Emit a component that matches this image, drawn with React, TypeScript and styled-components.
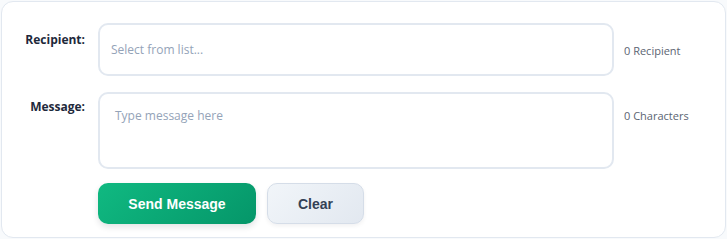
import React, { useState } from 'react';
import styled, { createGlobalStyle } from 'styled-components';

const GlobalStyle = createGlobalStyle`
  html, body {
    margin: 0;
    padding: 0;
    background: #f8fafc;
  }
  body {
    font-family: "Open Sans", "Noto Sans", sans-serif;
  }
`;

const Page = styled.div`
  padding: 1px;
`;

const Card = styled.form`
  box-sizing: border-box;
  width: 725px;
  height: 237px;
  background: #ffffff;
  border: 1px solid #e2e8f0;
  border-radius: 12px;
  padding: 21px 20px 0 19px;
  display: flex;
  flex-direction: column;
  gap: 16px;
`;

const Row = styled.div`
  display: flex;
  align-items: flex-start;
`;

const Label = styled.label<{ offset: number }>`
  width: 64px;
  flex: 0 0 64px;
  text-align: right;
  font-size: 12px;
  font-weight: 700;
  line-height: 16px;
  color: #1e293b;
  padding-top: ${p => p.offset}px;
  margin-right: 13px;
`;

const fieldBase = `
  box-sizing: border-box;
  width: 516px;
  flex: 0 0 516px;
  border: 2px solid #e2e8f0;
  border-radius: 10px;
  background: #ffffff;
  font-family: "Open Sans", "Noto Sans", sans-serif;
  font-size: 12px;
  color: #1e293b;
  outline: none;
  margin: 0;
  &::placeholder {
    color: #94a3b8;
  }
`;

const Input = styled.input`
  ${fieldBase}
  height: 53px;
  padding: 0 11px;
`;

const TextArea = styled.textarea`
  ${fieldBase}
  height: 77px;
  padding: 13px 15px;
  line-height: 18px;
  resize: none;
`;

const Side = styled.span<{ offset: number }>`
  margin-left: 10px;
  padding-top: ${p => p.offset}px;
  font-size: 11px;
  line-height: 16px;
  color: #5b6472;
`;

const Actions = styled.div`
  display: flex;
  gap: 11px;
  margin-left: 77px;
  margin-top: -2px;
`;

const Button = styled.button<{ variant: 'primary' | 'secondary' }>`
  box-sizing: border-box;
  height: 41px;
  border-radius: 10px;
  font-family: "Liberation Sans", Arial, sans-serif;
  font-size: 14px;
  font-weight: 700;
  cursor: pointer;
  padding: 0;
  ${p =>
    p.variant === 'primary'
      ? `
    width: 158px;
    border: none;
    color: #ffffff;
    background: linear-gradient(135deg, #10b981 0%, #059669 100%);
    box-shadow: 0 3px 6px rgba(15, 23, 42, 0.12);
  `
      : `
    width: 97px;
    border: 1px solid #d5dde8;
    color: #334155;
    background: linear-gradient(135deg, #f1f5f9 0%, #e2e8f0 100%);
    box-shadow: 0 2px 4px rgba(15, 23, 42, 0.06);
  `}
`;

export default function App() {
  const [recipient, setRecipient] = useState('');
  const [message, setMessage] = useState('');

  const recipientCount = recipient.trim() ? recipient.split(',').filter(s => s.trim()).length : 0;

  return (
    <Page>
      <GlobalStyle />
      <Card onSubmit={e => e.preventDefault()}>
        <Row>
          <Label offset={9}>Recipient:</Label>
          <Input
            placeholder="Select from list..."
            value={recipient}
            onChange={e => setRecipient(e.target.value)}
          />
          <Side offset={20}>{recipientCount} Recipient</Side>
        </Row>
        <Row>
          <Label offset={7}>Message:</Label>
          <TextArea
            placeholder="Type message here"
            value={message}
            onChange={e => setMessage(e.target.value)}
          />
          <Side offset={16}>{message.length} Characters</Side>
        </Row>
        <Actions>
          <Button variant="primary" type="submit">Send Message</Button>
          <Button
            variant="secondary"
            type="button"
            onClick={() => {
              setRecipient('');
              setMessage('');
            }}
          >
            Clear
          </Button>
        </Actions>
      </Card>
    </Page>
  );
}
